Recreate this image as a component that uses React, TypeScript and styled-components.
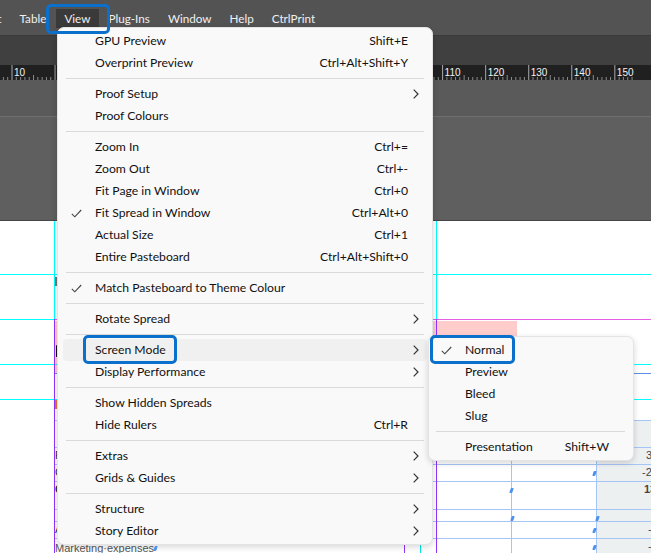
import styled, { createGlobalStyle } from "styled-components";

const GlobalStyle = createGlobalStyle`
  html, body {
    margin: 0;
    background: #fff;
    overflow: hidden;
  }
`;

const uiFont = `Lato, "Noto Sans", sans-serif`;

const Page = styled.div`
  position: relative;
  width: 651px;
  height: 553px;
  display: flex;
  flex-direction: column;
  overflow: hidden;
  font-family: ${uiFont};
  font-size: 12.2px;
`;

const MenuBar = styled.div`
  height: 36px;
  flex: none;
  display: flex;
  align-items: center;
  gap: 1px;
  background: #535353;
  border-bottom: 1px solid #3a3a3a;
  box-sizing: border-box;
  margin-left: -41.5px;
  padding-top: 1px;
  font-size: 11.7px;
`;

const BarItem = styled.div<{ $active?: boolean }>`
  height: 19px;
  line-height: 19px;
  padding: 0 8.5px;
  color: #f0f0f0;
  white-space: nowrap;
  background: ${(p) => (p.$active ? "#3a3a3a" : "transparent")};
`;

const ControlStrip = styled.div`
  height: 29px;
  flex: none;
  background: #404040;
`;

const RulerBar = styled.svg`
  display: block;
  flex: none;
  width: 651px;
  height: 15px;
  background: #202020;
`;

const GreyBand = styled.div`
  height: 36px;
  flex: none;
  background: #5a5a5a;
  border-bottom: 1px solid #6e6e6e;
`;

const Pasteboard = styled.div`
  height: 104px;
  flex: none;
  background: #5f5f5f;
  border-bottom: 1px solid #454545;
  box-sizing: border-box;
`;

const Canvas = styled.div`
  position: relative;
  flex: 1;
  background: #fff;
`;

/* guide lines, y and x are relative to the canvas */
const HGuide = styled.div<{ $y: number; $from?: number; $to?: number; $color: string }>`
  position: absolute;
  top: ${(p) => p.$y}px;
  left: ${(p) => p.$from ?? 0}px;
  width: ${(p) => (p.$to ?? 651) - (p.$from ?? 0)}px;
  height: 1px;
  background: ${(p) => p.$color};
`;

const VGuide = styled.div<{ $x: number; $from?: number; $to?: number; $color: string }>`
  position: absolute;
  left: ${(p) => p.$x}px;
  top: ${(p) => p.$from ?? 0}px;
  height: ${(p) => (p.$to ?? 332) - (p.$from ?? 0)}px;
  width: 1px;
  background: ${(p) => p.$color};
`;

const PinkBlock = styled.div`
  position: absolute;
  left: 55px;
  top: 100px;
  width: 462px;
  height: 52px;
  background: #ffcccc;
`;

const PinkText = styled.div`
  position: absolute;
  left: 55.5px;
  top: 124px;
  width: 1.5px;
  height: 12px;
  border-radius: 1px;
  background: #111;
`;

const Tab = styled.div<{ $top: number; $color: string }>`
  position: absolute;
  left: 55px;
  top: ${(p) => p.$top}px;
  width: 3px;
  height: 9px;
  background: ${(p) => p.$color};
`;

const FinTable = styled.div`
  position: absolute;
  left: 55px;
  top: 199px;
  width: 596px;
`;

const TableRow = styled.div<{ $h: number }>`
  display: grid;
  grid-template-columns: 457px 85px 54px;
  height: ${(p) => p.$h}px;
  box-sizing: border-box;
  border-top: 1px solid #a6c5f7;
`;

const Cell = styled.div<{ $grey?: boolean; $bold?: boolean; $line?: boolean }>`
  position: relative;
  box-sizing: border-box;
  font-family: "Liberation Sans", sans-serif;
  font-size: 11px;
  line-height: 15px;
  color: #444;
  white-space: nowrap;
  font-weight: ${(p) => (p.$bold ? 700 : 400)};
  background: ${(p) => (p.$grey ? "#edf0f0" : "transparent")};
  border-right: ${(p) => (p.$line ? "1px solid #a6c5f7" : "none")};
`;

const Label = styled.span<{ $full?: boolean }>`
  display: block;
  color: ${(p) => (p.$full ? "#555" : "#333")};
  line-height: ${(p) => (p.$full ? "19px" : "15px")};
`;

const Amount = styled.span<{ $pad: number }>`
  display: block;
  padding-left: ${(p) => p.$pad}px;
`;

const Mark = styled.i<{ $right?: number; $left?: number; $top?: number }>`
  position: absolute;
  z-index: 1;
  top: ${(p) => p.$top ?? 6}px;
  ${(p) => (p.$left !== undefined ? `left: ${p.$left}px;` : `right: ${p.$right ?? 0}px;`)}
  width: 3px;
  height: 5px;
  border-radius: 1px;
  background: #4d90f0;
  transform: skewX(-18deg);
`;

const Menu = styled.div<{ $x: number; $y: number; $w: number; $pad?: number }>`
  position: absolute;
  left: ${(p) => p.$x}px;
  top: ${(p) => p.$y}px;
  width: ${(p) => p.$w}px;
  box-sizing: border-box;
  padding: 2px 5px 2px ${(p) => p.$pad ?? 5}px;
  background: #f9f9f9;
  border: 1px solid #e4e4e4;
  border-radius: 7px;
  box-shadow: 0 2px 6px rgba(0, 0, 0, 0.16);
  color: #111;
`;

const MenuRow = styled.div<{ $hover?: boolean }>`
  position: relative;
  display: flex;
  align-items: center;
  height: 22px;
  border-radius: 4px;
  background: ${(p) => (p.$hover ? "#f0f0f0" : "transparent")};
  white-space: nowrap;
`;

const CheckSlot = styled.span`
  flex: none;
  width: 32px;
  display: flex;
  justify-content: center;
  padding-right: 6px;
  box-sizing: border-box;
`;

const RowLabel = styled.span`
  flex: 1;
  padding-bottom: 2px;
`;

const Shortcut = styled.span`
  flex: none;
  padding-bottom: 2px;
`;

const EndSlot = styled.span`
  flex: none;
  width: 19px;
  display: flex;
  justify-content: flex-end;
  padding-right: 8px;
  box-sizing: border-box;
`;

const Rule = styled.div`
  height: 1px;
  margin: 4px 3px;
  background: #d9d9d9;
`;

const Callout = styled.div<{ $x: number; $y: number; $w: number; $h: number }>`
  position: absolute;
  left: ${(p) => p.$x}px;
  top: ${(p) => p.$y}px;
  width: ${(p) => p.$w}px;
  height: ${(p) => p.$h}px;
  box-sizing: border-box;
  border: 3.5px solid #0a70cc;
  border-radius: 5px;
  pointer-events: none;
`;

type Item = { label?: string; keys?: string; check?: boolean; more?: boolean; hover?: boolean };

const viewMenu: Item[] = [
  { label: "GPU Preview", keys: "Shift+E" },
  { label: "Overprint Preview", keys: "Ctrl+Alt+Shift+Y" },
  {},
  { label: "Proof Setup", more: true },
  { label: "Proof Colours" },
  {},
  { label: "Zoom In", keys: "Ctrl+=" },
  { label: "Zoom Out", keys: "Ctrl+-" },
  { label: "Fit Page in Window", keys: "Ctrl+0" },
  { label: "Fit Spread in Window", keys: "Ctrl+Alt+0", check: true },
  { label: "Actual Size", keys: "Ctrl+1" },
  { label: "Entire Pasteboard", keys: "Ctrl+Alt+Shift+0" },
  {},
  { label: "Match Pasteboard to Theme Colour", check: true },
  {},
  { label: "Rotate Spread", more: true },
  {},
  { label: "Screen Mode", more: true, hover: true },
  { label: "Display Performance", more: true },
  {},
  { label: "Show Hidden Spreads" },
  { label: "Hide Rulers", keys: "Ctrl+R" },
  {},
  { label: "Extras", more: true },
  { label: "Grids & Guides", more: true },
  {},
  { label: "Structure", more: true },
  { label: "Story Editor", more: true },
];

const screenModeMenu: Item[] = [
  { label: "Normal", check: true },
  { label: "Preview" },
  { label: "Bleed" },
  { label: "Slug" },
  {},
  { label: "Presentation", keys: "Shift+W" },
];

const barItems = ["Object", "Table", "View", "Plug-Ins", "Window", "Help", "CtrlPrint"];

const CheckIcon = () => (
  <svg width="11" height="9" viewBox="0 0 11 9" fill="none">
    <path d="M0.8 4.8 L3.8 7.8 L10.2 1" stroke="#444" strokeWidth="1.1" />
  </svg>
);

const Chevron = () => (
  <svg width="6" height="10" viewBox="0 0 6 10" fill="none">
    <path d="M0.7 0.7 L5 5 L0.7 9.3" stroke="#333" strokeWidth="1.2" />
  </svg>
);

const Ruler = () => {
  const unit = 4.306;
  const ticks = [];
  for (let i = 0; i < 155; i++) {
    const x = 12 + i * unit - 43.06;
    const major = i % 10 === 0;
    const mid = i % 5 === 0;
    const y1 = major ? 0 : mid ? 10 : 12;
    ticks.push(<line key={i} x1={x} x2={x} y1={y1} y2={15} stroke={major ? "#a8a8a8" : "#8a8a8a"} strokeWidth="1" />);
  }
  const labels = [10, 20, 30, 40, 50, 60, 70, 80, 90, 100, 110, 120, 130, 140, 150];
  return (
    <RulerBar viewBox="0 0 651 15">
      {ticks}
      {labels.map((n) => (
        <text key={n} x={12 + ((n - 10) / 10) * 43.06 + 2} y={11} fill="#f2f2f2" fontSize="10" fontFamily="Liberation Sans, sans-serif">
          {n}
        </text>
      ))}
    </RulerBar>
  );
};

const renderItems = (items: Item[]) =>
  items.map((item, i) =>
    item.label ? (
      <MenuRow key={i} $hover={item.hover}>
        <CheckSlot>{item.check && <CheckIcon />}</CheckSlot>
        <RowLabel>{item.label}</RowLabel>
        {item.keys && <Shortcut>{item.keys}</Shortcut>}
        <EndSlot>{item.more && <Chevron />}</EndSlot>
      </MenuRow>
    ) : (
      <Rule key={i} />
    )
  );

export default function App() {
  return (
    <Page>
      <GlobalStyle />
      <MenuBar>
        {barItems.map((name) => (
          <BarItem key={name} $active={name === "View"}>
            {name}
          </BarItem>
        ))}
      </MenuBar>
      <ControlStrip />
      <Ruler />
      <GreyBand />
      <Pasteboard />
      <Canvas>
        <PinkBlock />
        <PinkText />
        <Tab $top={56} $color="#777" />
        <Tab $top={179} $color="#f0702a" />
        <HGuide $y={53} $color="#00ffff" />
        <HGuide $y={98} $to={55} $color="#00ffff" />
        <HGuide $y={98} $from={55} $color="#e65ee6" />
        <HGuide $y={143} $color="#00ffff" />
        <HGuide $y={152} $from={55} $color="#5b8fe6" />
        <HGuide $y={178} $color="#00ffff" />
        <FinTable>
          <TableRow $h={27}>
            <Cell $line />
            <Cell $line />
            <Cell $grey />
          </TableRow>
          <TableRow $h={17}>
            <Cell $line><Label>Personnel costs</Label></Cell>
            <Cell $line />
            <Cell $grey><Amount $pad={49}>3,120</Amount></Cell>
          </TableRow>
          <TableRow $h={17}>
            <Cell $line><Label>Cost of sales</Label></Cell>
            <Cell $line><Mark $right={0} $top={6} /></Cell>
            <Cell $grey><Amount $pad={45}>-2,480</Amount></Cell>
          </TableRow>
          <TableRow $h={28}>
            <Cell $line $bold><Label>Contribution</Label><Mark $right={-2} $top={6} /></Cell>
            <Cell $line />
            <Cell $grey $bold><Amount $pad={47}>13,640</Amount></Cell>
          </TableRow>
          <TableRow $h={12}>
            <Cell $line><Mark $right={-3} $top={6} /></Cell>
            <Cell $line><Mark $right={-3} $top={6} /></Cell>
            <Cell $grey />
          </TableRow>
          <TableRow $h={17}>
            <Cell $line><Label>Admin costs</Label></Cell>
            <Cell $line><Mark $right={0} $top={6} /></Cell>
            <Cell $grey><Amount $pad={51}>-410</Amount></Cell>
          </TableRow>
          <TableRow $h={20}>
            <Cell $line><Label $full>Marketing·expenses</Label><Mark $left={99} $top={7} /></Cell>
            <Cell $line><Mark $right={0} $top={6} /></Cell>
            <Cell $grey><Amount $pad={51}>-980</Amount></Cell>
          </TableRow>
        </FinTable>
        <VGuide $x={54} $to={98} $color="#00ffff" />
        <VGuide $x={436} $to={98} $color="#00ffff" />
        <VGuide $x={54} $from={98} $color="#9333ff" />
        <VGuide $x={436} $from={98} $color="#9333ff" />
        <VGuide $x={404} $from={98} $color="#9333ff" />
        <VGuide $x={420} $from={98} $color="#00e5e5" />
      </Canvas>
      <Menu $x={57} $y={27} $w={376}>
        {renderItems(viewMenu)}
      </Menu>
      <Menu $x={428} $y={336} $w={206} $pad={4}>
        {renderItems(screenModeMenu)}
      </Menu>
      <Callout $x={46} $y={4} $w={64} $h={30} />
      <Callout $x={83} $y={335} $w={94} $h={29} />
      <Callout $x={430} $y={335} $w={85} $h={29} />
    </Page>
  );
}
